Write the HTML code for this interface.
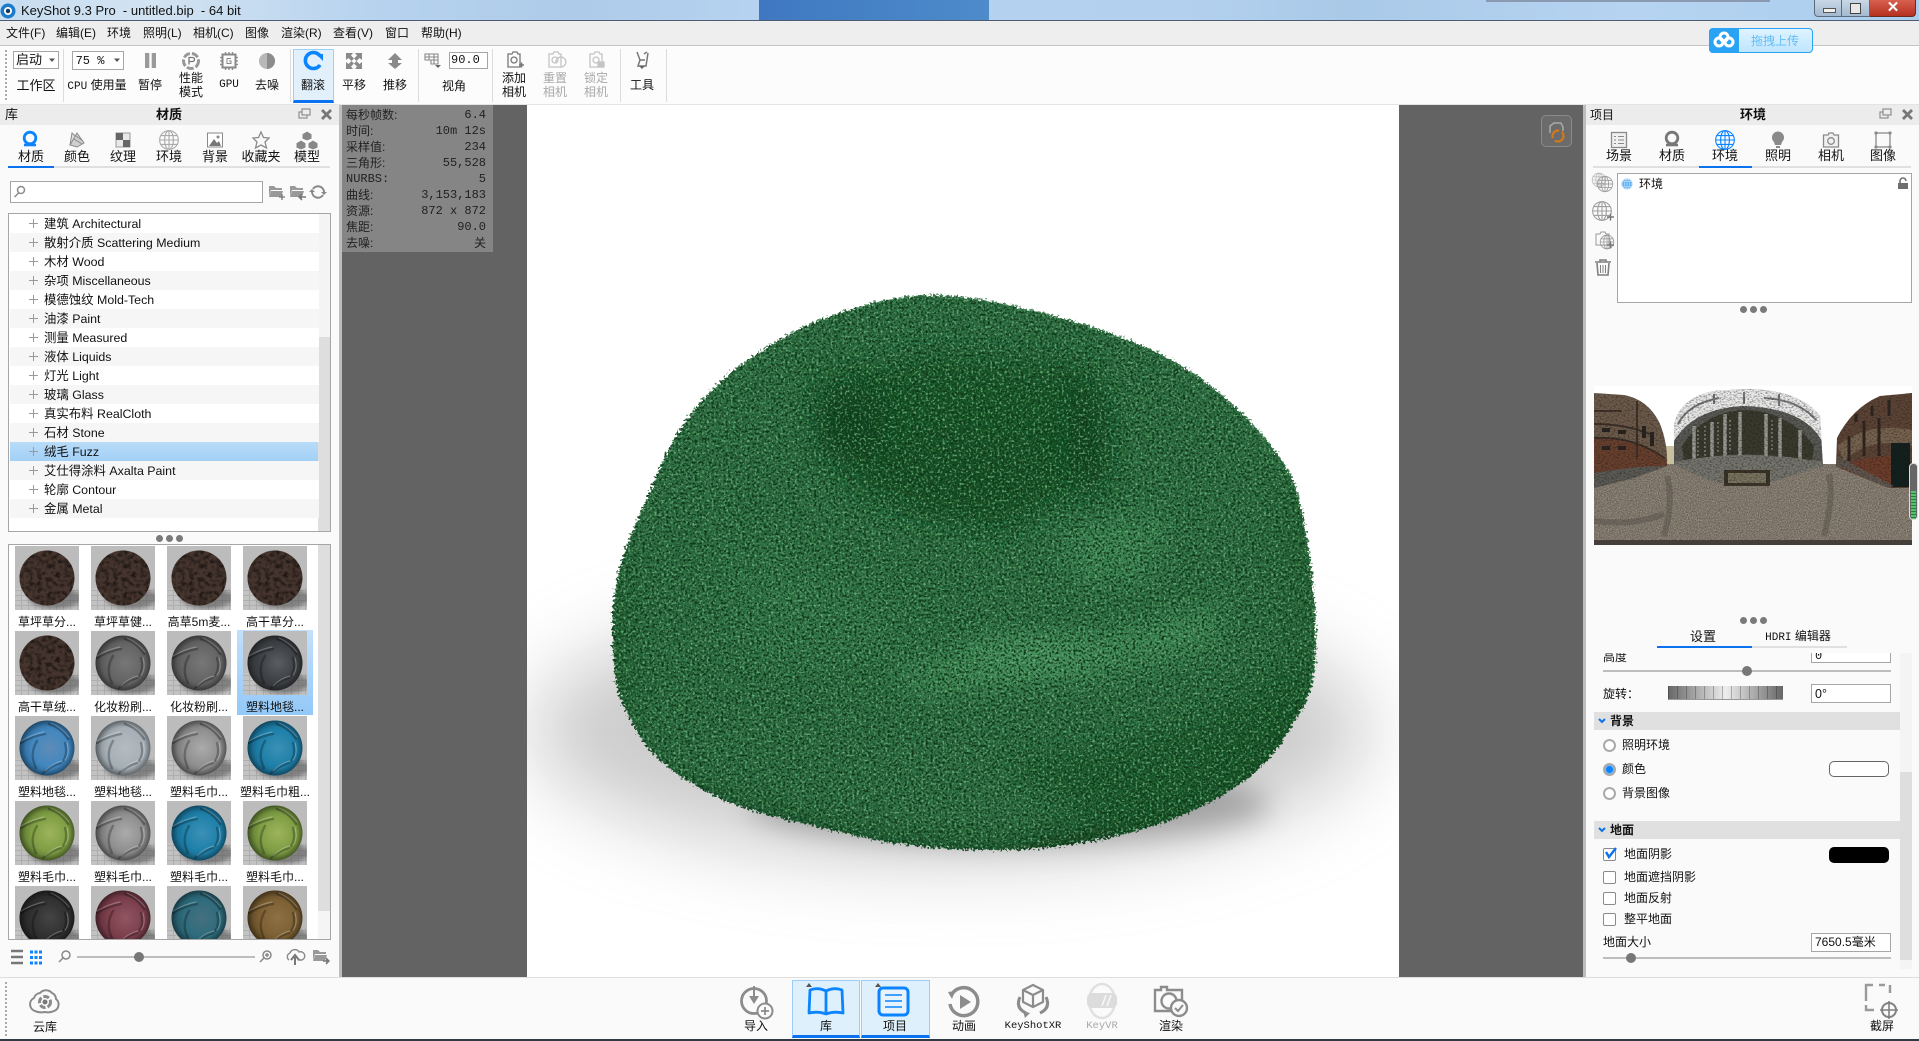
<!DOCTYPE html>
<html lang="zh"><head><meta charset="utf-8"><title>KeyShot 9.3 Pro</title>
<style>
html,body{margin:0;padding:0;width:1919px;height:1041px;overflow:hidden;background:#fafafa}
body{position:relative;font:12px "Liberation Sans","Noto Sans CJK SC",sans-serif;color:#111}
.a{position:absolute}
.t{position:absolute;white-space:nowrap;transform:translateY(-50%);line-height:16px}
.c{position:absolute;white-space:nowrap;transform:translate(-50%,-50%);line-height:16px;text-align:center}
.b{font-weight:700}
.g{color:#a8a8a8}
.m{font-family:"Liberation Mono","Noto Sans CJK SC",monospace}
.inp{position:absolute;background:#fff;border:1px solid #a6a6a6;box-sizing:border-box}
.row{position:absolute;left:1px;width:309px;height:19px;background:#fff}
.row.o{background:#f6f6f6}
.row.s{background:linear-gradient(#b8dcf9,#a3d0f6)}
.row span{position:absolute;left:34px;top:2px;line-height:17px;font-size:12.4px;white-space:nowrap}
.row i{position:absolute;left:19px;top:5px;width:9px;height:9px;background:linear-gradient(#9a9a9a,#9a9a9a) center/9px 1px no-repeat,linear-gradient(#9a9a9a,#9a9a9a) center/1px 9px no-repeat}
.dot{position:absolute;width:7px;height:7px;border-radius:50%;background:#7a7a7a}
.th{position:absolute;width:64px;height:64px;display:block}
.radio{position:absolute;width:13px;height:13px;border-radius:50%;border:2px solid #aaa;background:#fff;box-sizing:border-box}
.chk{position:absolute;width:13px;height:13px;border:1.5px solid #8a8a8a;border-radius:2px;background:#fff;box-sizing:border-box}
.sl{position:absolute;height:2px;background:#bdbdbd}
.kn{position:absolute;width:10px;height:10px;border-radius:50%;background:#777}
.sep{position:absolute;top:49px;width:1px;height:53px;background:#dcdcdc}
.grip{position:absolute;width:2px;background:repeating-linear-gradient(#aaa 0 2px,transparent 2px 4px)}
</style></head><body>
<svg width="0" height="0" style="position:absolute"><defs>
<filter id="nz" x="0" y="0" width="100%" height="100%"><feTurbulence type="fractalNoise" baseFrequency=".55" numOctaves="2" seed="5"/><feColorMatrix values="0 0 0 0 .5 0 0 0 0 .5 0 0 0 0 .5 1.6 0 0 0 -.5"/></filter>
<filter id="rock" x="-5%" y="-5%" width="110%" height="110%" color-interpolation-filters="sRGB"><feTurbulence type="fractalNoise" baseFrequency=".22" numOctaves="3" seed="8" result="n"/><feColorMatrix in="n" values="0 0 0 0 .12 0 0 0 0 .09 0 0 0 0 .08 2.6 0 0 0 -1.05" result="d"/><feComposite in="d" in2="SourceGraphic" operator="in" result="d2"/><feMerge><feMergeNode in="SourceGraphic"/><feMergeNode in="d2"/></feMerge></filter>
<filter id="bl2"><feGaussianBlur stdDeviation="2"/></filter>
<radialGradient id="edge" cx=".5" cy=".5" r=".5"><stop offset=".78" stop-color="#000" stop-opacity="0"/><stop offset="1" stop-color="#000" stop-opacity=".3"/></radialGradient>
<pattern id="tile" width="7" height="5" patternUnits="userSpaceOnUse"><rect width="7" height="5" fill="#c2c2c2"/><path d="M0 4.5H7M6.5 0V5" stroke="#a9a9a9" stroke-width=".8"/></pattern>
<symbol id="b" viewBox="0 0 64 64"><rect width="64" height="64" fill="#bcbcbc"/><rect y="42" width="64" height="22" fill="url(#tile)"/><rect width="64" height="42" filter="url(#nz)" opacity=".5"/><ellipse cx="40" cy="52" rx="26" ry="11" fill="#555" opacity=".6" filter="url(#bl2)"/></symbol>
<symbol id="w" viewBox="0 0 64 64"><g fill="none" stroke-linecap="round"><g stroke="#000" stroke-opacity=".26" stroke-width="2.400"><path d="M6 27Q18 20 30 18"/><path d="M34 8Q46 12 53 23"/><path d="M50 27Q53 38 48 45"/><path d="M46 47Q36 50 28 57"/><path d="M22 25Q14 38 21 52"/></g><g stroke="#fff" stroke-opacity=".25" stroke-width="1.200"><path d="M6 25Q18 18 29 16"/><path d="M36 7Q47 12 54 21"/><path d="M52 27Q55 38 50 44"/><path d="M47 45Q38 47 30 55"/></g></g><circle cx="32" cy="32" r="27.500" fill="url(#edge)"/></symbol>
<radialGradient id="s1" cx=".55" cy=".5" r=".6"><stop offset="0" stop-color="#5f8cb7"/><stop offset=".55" stop-color="#4287bf"/><stop offset="1" stop-color="#235a85"/></radialGradient>
<radialGradient id="s2" cx=".55" cy=".5" r=".6"><stop offset="0" stop-color="#b5bcc1"/><stop offset=".6" stop-color="#a5afb5"/><stop offset="1" stop-color="#717a80"/></radialGradient>
<radialGradient id="s3" cx=".55" cy=".5" r=".6"><stop offset="0" stop-color="#ababab"/><stop offset=".55" stop-color="#8f8f8f"/><stop offset="1" stop-color="#5e5e5e"/></radialGradient>
<radialGradient id="s4" cx=".55" cy=".5" r=".6"><stop offset="0" stop-color="#3b90b5"/><stop offset=".55" stop-color="#1f80a9"/><stop offset="1" stop-color="#125a7c"/></radialGradient>
<radialGradient id="s5" cx=".55" cy=".5" r=".6"><stop offset="0" stop-color="#9db45c"/><stop offset=".55" stop-color="#7f9e44"/><stop offset="1" stop-color="#50682a"/></radialGradient>
<radialGradient id="s6" cx=".55" cy=".5" r=".6"><stop offset="0" stop-color="#444"/><stop offset=".6" stop-color="#2f2f2f"/><stop offset="1" stop-color="#1d1d1d"/></radialGradient>
<radialGradient id="s7" cx=".55" cy=".5" r=".6"><stop offset="0" stop-color="#8f5560"/><stop offset=".55" stop-color="#7c404c"/><stop offset="1" stop-color="#552833"/></radialGradient>
<radialGradient id="s8" cx=".55" cy=".5" r=".6"><stop offset="0" stop-color="#46707f"/><stop offset=".55" stop-color="#2f6c7c"/><stop offset="1" stop-color="#1c4b58"/></radialGradient>
<radialGradient id="s9" cx=".55" cy=".5" r=".6"><stop offset="0" stop-color="#8d7145"/><stop offset=".55" stop-color="#7d6034"/><stop offset="1" stop-color="#523e1f"/></radialGradient>
<radialGradient id="s10" cx=".55" cy=".5" r=".6"><stop offset="0" stop-color="#777"/><stop offset=".6" stop-color="#636363"/><stop offset="1" stop-color="#454545"/></radialGradient>
<radialGradient id="s11" cx=".55" cy=".5" r=".6"><stop offset="0" stop-color="#5a5d62"/><stop offset=".5" stop-color="#404347"/><stop offset="1" stop-color="#2c2e31"/></radialGradient>
<symbol id="br" viewBox="0 0 64 64"><use href="#b"/><circle cx="32" cy="32" r="27.5" fill="#46352e" filter="url(#rock)"/></symbol>
<symbol id="gl" viewBox="-10 -10 20 20"><g fill="none" stroke="currentColor" stroke-width="1"><circle r="8.5"/><ellipse rx="4" ry="8.5"/><path d="M0-8.5V8.5M-8.5 0H8.5M-7.5-4H7.5M-7.5 4H7.5"/></g></symbol>
<filter id="fur" x="-6%" y="-6%" width="112%" height="112%" color-interpolation-filters="sRGB">
<feTurbulence type="fractalNoise" baseFrequency=".42" numOctaves="2" seed="11" result="n"/>
<feDisplacementMap in="SourceGraphic" in2="n" scale="9" xChannelSelector="R" yChannelSelector="G" result="d"/>
<feColorMatrix in="n" values="0 0 0 0 .06 0 0 0 0 .22 0 0 0 0 .1 4.6 0 0 0 -2.1" result="dk"/>
<feComposite in="dk" in2="d" operator="in" result="dk2"/>
<feColorMatrix in="n" values="0 0 0 0 .42 0 0 0 0 .68 0 0 0 0 .47 0 3.8 0 0 -2" result="lt"/>
<feComposite in="lt" in2="d" operator="in" result="lt2"/>
<feMerge><feMergeNode in="d"/><feMergeNode in="dk2"/><feMergeNode in="lt2"/></feMerge></filter>
<filter id="bk14" x="-50%" y="-50%" width="200%" height="200%"><feGaussianBlur stdDeviation="14"/></filter>
<filter id="bk26" x="-50%" y="-50%" width="200%" height="200%"><feGaussianBlur stdDeviation="26"/></filter>
<filter id="bk40" x="-50%" y="-100%" width="200%" height="300%"><feGaussianBlur stdDeviation="40"/></filter>
<clipPath id="bc"><path d="M940 295C1000 298 1115 328 1172 360C1212 382 1270 432 1292 478C1306 512 1316 590 1316 644C1316 680 1308 700 1300 712C1280 745 1270 765 1232 789C1200 810 1160 826 1119 835C1080 845 1030 851 987 850C930 849 880 843 836 831C790 820 745 812 709 793C680 778 655 760 642 739C625 712 614 690 614 663C612 640 612 620 614 598C618 565 630 535 642 510C655 480 668 445 685 422C700 400 720 380 742 364C770 345 795 328 826 318C860 305 900 294 940 295Z"/></clipPath>
<filter id="gr" x="0" y="0" width="100%" height="100%" color-interpolation-filters="sRGB"><feTurbulence type="fractalNoise" baseFrequency=".9" numOctaves="2" seed="2" result="n"/><feColorMatrix in="n" values="0 0 0 0 .32 0 0 0 0 .29 0 0 0 0 .26 3.6 0 0 0 -1.6" result="d"/><feColorMatrix in="n" values="0 0 0 0 .72 0 0 0 0 .68 0 0 0 0 .62 0 3.2 0 0 -1.6" result="l"/><feMerge><feMergeNode in="d"/><feMergeNode in="l"/></feMerge></filter>
<filter id="gr2" x="0" y="0" width="100%" height="100%" color-interpolation-filters="sRGB"><feTurbulence type="fractalNoise" baseFrequency=".5 .7" numOctaves="2" seed="7"/><feColorMatrix values="0 0 0 0 .1 0 0 0 0 .09 0 0 0 0 .08 3.4 0 0 0 -1.5"/></filter>
<clipPath id="bld"><path d="M0 7L30 9Q55 14 66 38Q74 58 73 80L40 92L0 102Z"/><path d="M80 78V40Q85 12 120 5L150 3Q205 3 226 30L229 80L205 86Q170 103 130 98Q100 90 80 78Z"/><path d="M242 80L243 52Q258 22 286 10L318 7V102L295 102L270 92Z"/></clipPath>
</defs></svg>

<!-- title bar -->
<div class="a" style="left:0;top:0;width:1919px;height:21px;background:linear-gradient(90deg,#c7ddf0 0,#d2e3f2 8%,#b6d2ee 20%,#aecbe9 30%,#b5d3f0 39%,#b3d1ef 62%,#a9c9e8 70%,#b6d4f2 85%,#aacdec 100%)"></div>
<div class="a" style="left:759px;top:0;width:230px;height:21px;background:linear-gradient(90deg,#3f78c0,#4d8bcb)"></div>
<div class="a" style="left:1486px;top:0;width:284px;height:2px;background:#8a9ab0"></div>
<div class="a" style="left:0;top:20px;width:1919px;height:1px;background:#4d5c70"></div>
<svg class="a" style="left:0;top:0" width="20" height="20"><circle cx="8" cy="11" r="7.5" fill="#1c7cc9"/><circle cx="8" cy="11" r="4" fill="#fff"/><circle cx="8" cy="11" r="2.2" fill="#16365a"/></svg>
<div class="t" style="left:21px;top:11px;font-size:13px;color:#111">KeyShot 9.3 Pro&nbsp; - untitled.bip&nbsp; - 64 bit</div>
<div class="a" style="left:1814px;top:0;width:28px;height:17px;background:linear-gradient(#c8d8e8,#a4b9cf);border:1px solid #5c6b7e;border-top:0;box-sizing:border-box;border-radius:0 0 0 4px"><div class="a" style="left:8px;top:8px;width:11px;height:3px;background:#f0f0f0;border:1px solid #555"></div></div>
<div class="a" style="left:1842px;top:0;width:28px;height:17px;background:linear-gradient(#c8d8e8,#a4b9cf);border:1px solid #5c6b7e;border-left:0;border-top:0;box-sizing:border-box"><div class="a" style="left:8px;top:3px;width:9px;height:9px;border:1.5px solid #444;background:#e8e8e8"></div></div>
<div class="a" style="left:1870px;top:0;width:46px;height:17px;background:linear-gradient(#d8604f,#b5301f);border:1px solid #6b2a24;border-left:0;border-top:0;box-sizing:border-box;border-radius:0 0 4px 0"></div>
<div class="c b" style="left:1893px;top:8px;font-size:15px;color:#fff">✕</div>

<!-- menu -->
<div class="a" style="left:0;top:21px;width:1919px;height:25px;background:#eeeeee;border-bottom:1px solid #c4c4c4;box-sizing:border-box"></div>
<div class="t" style="left:6px;top:33px">文件(F)</div><div class="t" style="left:56px;top:33px">编辑(E)</div><div class="t" style="left:107px;top:33px">环境</div><div class="t" style="left:143px;top:33px">照明(L)</div><div class="t" style="left:193px;top:33px">相机(C)</div><div class="t" style="left:245px;top:33px">图像</div><div class="t" style="left:281px;top:33px">渲染(R)</div><div class="t" style="left:333px;top:33px">查看(V)</div><div class="t" style="left:385px;top:33px">窗口</div><div class="t" style="left:421px;top:33px">帮助(H)</div>

<!-- toolbar -->
<div class="a" style="left:0;top:46px;width:1919px;height:59px;background:#fcfcfc;border-bottom:1px solid #e4e4e4;box-sizing:border-box"></div>
<div class="a" style="left:1709px;top:28px;width:104px;height:25px;background:linear-gradient(#dff3ff,#bfe6ff);border:1px solid #2aa3f5;box-sizing:border-box;border-radius:4px"></div>
<div class="a" style="left:1709px;top:28px;width:30px;height:25px;background:#2aa3f5;border-radius:4px 0 0 4px"></div>
<svg class="a" style="left:1712px;top:30px" width="24" height="20" fill="none" stroke="#fff" stroke-width="3"><circle cx="12" cy="7" r="4"/><circle cx="7" cy="12" r="4"/><circle cx="17" cy="12" r="4"/></svg>
<div class="c" style="left:1775px;top:41px;color:#63bdf5">拖拽上传</div>
<div class="grip" style="left:5px;top:50px;height:50px"></div>
<div class="sep" style="left:63px"></div><div class="sep" style="left:290px"></div><div class="sep" style="left:418px"></div><div class="sep" style="left:492px"></div><div class="sep" style="left:620px"></div><div class="sep" style="left:666px"></div>
<div class="inp" style="left:13px;top:51px;width:46px;height:18px"></div><div class="t" style="left:16px;top:60px;font-size:13px">启动</div>
<div class="inp" style="left:72px;top:51px;width:52px;height:19px"></div><div class="c m" style="left:90px;top:61px;font-size:12px">75 %</div>
<div class="a" style="left:293px;top:49px;width:41px;height:54px;background:#e1f0fb;border:1px solid #9dd0f8;border-bottom:3px solid #0a72ee;box-sizing:border-box"></div>
<div class="c" style="left:36px;top:86px;font-size:13px">工作区</div>
<div class="c" style="left:97px;top:86px"><span class="m" style="font-size:11px">CPU</span> 使用量</div>
<div class="c" style="left:150px;top:85px">暂停</div>
<div class="c" style="left:191px;top:85px;line-height:14px">性能<br>模式</div>
<div class="c m" style="left:229px;top:85px;font-size:11px">GPU</div>
<div class="c" style="left:267px;top:85px">去噪</div>
<div class="c" style="left:313px;top:85px">翻滚</div><div class="c" style="left:354px;top:85px">平移</div><div class="c" style="left:395px;top:85px">推移</div>
<div class="inp" style="left:449px;top:52px;width:39px;height:17px"></div><div class="t m" style="left:451px;top:60px">90.0</div>
<div class="c" style="left:454px;top:86px">视角</div>
<div class="c" style="left:514px;top:85px;line-height:14px">添加<br>相机</div><div class="c g" style="left:555px;top:85px;line-height:14px">重置<br>相机</div><div class="c g" style="left:596px;top:85px;line-height:14px">锁定<br>相机</div>
<div class="c" style="left:642px;top:85px">工具</div>

<!-- viewport -->
<div class="a" style="left:339px;top:105px;width:3px;height:872px;background:#bdbdbd"></div>
<div class="a" style="left:1583px;top:105px;width:3px;height:872px;background:#bdbdbd"></div>
<div class="a" style="left:342px;top:105px;width:1241px;height:872px;background:#636363"></div>
<svg class="a" style="left:527px;top:105px" width="872" height="872" viewBox="527 105 872 872">
<rect x="527" y="105" width="872" height="872" fill="#fff"/>
<ellipse cx="950" cy="730" rx="420" ry="130" fill="#999" opacity=".5" filter="url(#bk40)"/>
<ellipse cx="1010" cy="805" rx="260" ry="40" fill="#555" opacity=".4" filter="url(#bk14)"/>
<g filter="url(#fur)"><g clip-path="url(#bc)">
<rect x="600" y="280" width="730" height="590" fill="#2c6d41"/>
<path d="M810 385L930 352L1090 362L1105 470L1000 535L860 490Z" fill="#185528" filter="url(#bk14)"/>
<ellipse cx="850" cy="425" rx="36" ry="40" fill="#0f3f1a" opacity=".8" filter="url(#bk14)"/>
<ellipse cx="1088" cy="440" rx="20" ry="60" fill="#0f3f1a" opacity=".75" filter="url(#bk14)"/>
<ellipse cx="960" cy="475" rx="90" ry="40" fill="#144c22" opacity=".6" filter="url(#bk14)"/>
<path d="M890 665Q1040 655 1230 600L1215 645Q1090 690 910 690Z" fill="#45925c" opacity=".85" filter="url(#bk14)"/>
<ellipse cx="1025" cy="651" rx="70" ry="14" fill="#4f9e68" opacity=".8" filter="url(#bk14)"/>
<path d="M1060 535Q1130 505 1170 520L1150 580L1070 585Z" fill="#43905a" opacity=".7" filter="url(#bk14)"/>
<path d="M720 540Q850 570 950 640L740 660Z" fill="#3b8552" opacity=".45" filter="url(#bk26)"/>
<path d="M600 750Q800 850 1000 850L1200 800L1330 680L1330 880L600 880Z" fill="#0c3517" opacity=".85" filter="url(#bk14)"/>
<path d="M1000 760Q1180 750 1300 660L1330 760L1150 860Z" fill="#185526" opacity=".8" filter="url(#bk14)"/>
<path d="M596 560L628 560L640 760L596 760Z" fill="#1d5a2c" opacity=".55" filter="url(#bk14)"/>
<path d="M1275 480L1335 480L1335 700L1290 700Z" fill="#1d5a2c" opacity=".45" filter="url(#bk14)"/>
</g></g>
</svg>
<div class="a" style="left:342px;top:105px;width:151px;height:147px;background:#858585"></div>
<div class="t" style="left:346px;top:115px;color:#222">每秒帧数:</div><div class="t m" style="right:1433px;top:115px;color:#222">6.4</div>
<div class="t" style="left:346px;top:131px;color:#222">时间:</div><div class="t m" style="right:1433px;top:131px;color:#222">10m 12s</div>
<div class="t" style="left:346px;top:147px;color:#222">采样值:</div><div class="t m" style="right:1433px;top:147px;color:#222">234</div>
<div class="t" style="left:346px;top:163px;color:#222">三角形:</div><div class="t m" style="right:1433px;top:163px;color:#222">55,528</div>
<div class="t m" style="left:346px;top:179px;color:#222">NURBS:</div><div class="t m" style="right:1433px;top:179px;color:#222">5</div>
<div class="t" style="left:346px;top:195px;color:#222">曲线:</div><div class="t m" style="right:1433px;top:195px;color:#222">3,153,183</div>
<div class="t" style="left:346px;top:211px;color:#222">资源:</div><div class="t m" style="right:1433px;top:211px;color:#222">872 x 872</div>
<div class="t" style="left:346px;top:227px;color:#222">焦距:</div><div class="t m" style="right:1433px;top:227px;color:#222">90.0</div>
<div class="t" style="left:346px;top:243px;color:#222">去噪:</div><div class="t" style="right:1433px;top:243px;color:#222">关</div>
<div class="a" style="left:1541px;top:115px;width:31px;height:32px;background:#6b6b6b;border:1px solid #8a8a8a;border-radius:5px;box-sizing:border-box"></div>
<svg class="a" style="left:1541px;top:115px" width="31" height="32" fill="none"><path d="M9 18V11L13 8H20L22 12V16" stroke="#aaa" stroke-width="1.500"/><circle cx="17" cy="21" r="5.500" stroke="#d07a1c" stroke-width="2.200" stroke-dasharray="12 3"/></svg>

<!-- left panel -->
<div class="a" style="left:0;top:105px;width:339px;height:20px;background:#ececec"></div>
<div class="t" style="left:5px;top:115px;font-size:13px">库</div><div class="c b" style="left:169px;top:115px;font-size:13px">材质</div>
<div class="c" style="left:31px;top:157px;font-size:13px">材质</div><div class="c" style="left:77px;top:157px;font-size:13px">颜色</div><div class="c" style="left:123px;top:157px;font-size:13px">纹理</div><div class="c" style="left:169px;top:157px;font-size:13px">环境</div><div class="c" style="left:215px;top:157px;font-size:13px">背景</div><div class="c" style="left:261px;top:157px;font-size:13px">收藏夹</div><div class="c" style="left:307px;top:157px;font-size:13px">模型</div>
<div class="a" style="left:8px;top:166px;width:322px;height:2px;background:#e0e0e0"></div><div class="a" style="left:8px;top:166px;width:46px;height:2px;background:#0a72ee"></div>
<div class="inp" style="left:10px;top:181px;width:253px;height:22px"></div>
<div class="a" style="left:8px;top:213px;width:323px;height:319px;background:#fff;border:1px solid #a6a6a6;box-sizing:border-box;overflow:hidden">
<div class="a" style="left:309px;top:0;width:12px;height:319px;background:#f4f4f4"></div><div class="a" style="left:309px;top:123px;width:12px;height:196px;background:#dedede"></div>
<div class="row" style="top:0"><i></i><span>建筑 Architectural</span></div>
<div class="row o" style="top:19px"><i></i><span>散射介质 Scattering Medium</span></div>
<div class="row" style="top:38px"><i></i><span>木材 Wood</span></div>
<div class="row o" style="top:57px"><i></i><span>杂项 Miscellaneous</span></div>
<div class="row" style="top:76px"><i></i><span>模德蚀纹 Mold-Tech</span></div>
<div class="row o" style="top:95px"><i></i><span>油漆 Paint</span></div>
<div class="row" style="top:114px"><i></i><span>测量 Measured</span></div>
<div class="row o" style="top:133px"><i></i><span>液体 Liquids</span></div>
<div class="row" style="top:152px"><i></i><span>灯光 Light</span></div>
<div class="row o" style="top:171px"><i></i><span>玻璃 Glass</span></div>
<div class="row" style="top:190px"><i></i><span>真实布料 RealCloth</span></div>
<div class="row o" style="top:209px"><i></i><span>石材 Stone</span></div>
<div class="row s" style="top:228px;width:308px"><i></i><span>绒毛 Fuzz</span></div>
<div class="row o" style="top:247px"><i></i><span>艾仕得涂料 Axalta Paint</span></div>
<div class="row" style="top:266px"><i></i><span>轮廓 Contour</span></div>
<div class="row o" style="top:285px"><i></i><span>金属 Metal</span></div>
</div>
<div class="dot" style="left:156px;top:535px"></div><div class="dot" style="left:166px;top:535px"></div><div class="dot" style="left:176px;top:535px"></div>

<!-- material grid -->
<div class="a" style="left:8px;top:544px;width:323px;height:396px;background:#fff;border:1px solid #a6a6a6;box-sizing:border-box;overflow:hidden">
<div class="a" style="left:309px;top:0;width:12px;height:366px;background:#dedede"></div><div class="a" style="left:309px;top:366px;width:12px;height:30px;background:#f5f5f5"></div>
<div class="a" style="left:228px;top:85px;width:76px;height:85px;background:linear-gradient(#c2e0fb,#93c8f8)"></div>
<svg class="th" style="left:6px;top:1px"><use href="#br" width="64" height="64"/></svg><svg class="th" style="left:82px;top:1px"><use href="#br" width="64" height="64"/></svg><svg class="th" style="left:158px;top:1px"><use href="#br" width="64" height="64"/></svg><svg class="th" style="left:234px;top:1px"><use href="#br" width="64" height="64"/></svg>
<svg class="th" style="left:6px;top:86px"><use href="#br" width="64" height="64"/></svg>
<svg class="th" style="left:82px;top:86px"><use href="#b" width="64" height="64"/><circle cx="32" cy="32" r="27.5" fill="url(#s10)"/><use href="#w" width="64" height="64"/></svg>
<svg class="th" style="left:158px;top:86px"><use href="#b" width="64" height="64"/><circle cx="32" cy="32" r="27.5" fill="url(#s10)"/><use href="#w" width="64" height="64"/></svg>
<svg class="th" style="left:234px;top:86px"><use href="#b" width="64" height="64"/><circle cx="32" cy="32" r="27.5" fill="url(#s11)"/><use href="#w" width="64" height="64"/></svg>
<svg class="th" style="left:6px;top:171px"><use href="#b" width="64" height="64"/><circle cx="32" cy="32" r="27.5" fill="url(#s1)"/><use href="#w" width="64" height="64"/></svg>
<svg class="th" style="left:82px;top:171px"><use href="#b" width="64" height="64"/><circle cx="32" cy="32" r="27.5" fill="url(#s2)"/><use href="#w" width="64" height="64"/></svg>
<svg class="th" style="left:158px;top:171px"><use href="#b" width="64" height="64"/><circle cx="32" cy="32" r="27.5" fill="url(#s3)"/><use href="#w" width="64" height="64"/></svg>
<svg class="th" style="left:234px;top:171px"><use href="#b" width="64" height="64"/><circle cx="32" cy="32" r="27.5" fill="url(#s4)"/><use href="#w" width="64" height="64"/></svg>
<svg class="th" style="left:6px;top:256px"><use href="#b" width="64" height="64"/><circle cx="32" cy="32" r="27.5" fill="url(#s5)"/><use href="#w" width="64" height="64"/></svg>
<svg class="th" style="left:82px;top:256px"><use href="#b" width="64" height="64"/><circle cx="32" cy="32" r="27.5" fill="url(#s3)"/><use href="#w" width="64" height="64"/></svg>
<svg class="th" style="left:158px;top:256px"><use href="#b" width="64" height="64"/><circle cx="32" cy="32" r="27.5" fill="url(#s4)"/><use href="#w" width="64" height="64"/></svg>
<svg class="th" style="left:234px;top:256px"><use href="#b" width="64" height="64"/><circle cx="32" cy="32" r="27.5" fill="url(#s5)"/><use href="#w" width="64" height="64"/></svg>
<svg class="th" style="left:6px;top:341px"><use href="#b" width="64" height="64"/><circle cx="32" cy="32" r="27.5" fill="url(#s6)"/><use href="#w" width="64" height="64"/></svg>
<svg class="th" style="left:82px;top:341px"><use href="#b" width="64" height="64"/><circle cx="32" cy="32" r="27.5" fill="url(#s7)"/><use href="#w" width="64" height="64"/></svg>
<svg class="th" style="left:158px;top:341px"><use href="#b" width="64" height="64"/><circle cx="32" cy="32" r="27.5" fill="url(#s8)"/><use href="#w" width="64" height="64"/></svg>
<svg class="th" style="left:234px;top:341px"><use href="#b" width="64" height="64"/><circle cx="32" cy="32" r="27.5" fill="url(#s9)"/><use href="#w" width="64" height="64"/></svg>
<div class="c" style="left:38px;top:77px">草坪草分...</div><div class="c" style="left:114px;top:77px">草坪草健...</div><div class="c" style="left:190px;top:77px">高草5m麦...</div><div class="c" style="left:266px;top:77px">高干草分...</div>
<div class="c" style="left:38px;top:162px">高干草绒...</div><div class="c" style="left:114px;top:162px">化妆粉刷...</div><div class="c" style="left:190px;top:162px">化妆粉刷...</div><div class="c" style="left:266px;top:162px">塑料地毯...</div>
<div class="c" style="left:38px;top:247px">塑料地毯...</div><div class="c" style="left:114px;top:247px">塑料地毯...</div><div class="c" style="left:190px;top:247px">塑料毛巾...</div><div class="c" style="left:266px;top:247px">塑料毛巾粗...</div>
<div class="c" style="left:38px;top:332px">塑料毛巾...</div><div class="c" style="left:114px;top:332px">塑料毛巾...</div><div class="c" style="left:190px;top:332px">塑料毛巾...</div><div class="c" style="left:266px;top:332px">塑料毛巾...</div>
</div>
<div class="sl" style="left:77px;top:956px;width:178px"></div><div class="kn" style="left:134px;top:952px"></div>

<!-- bottom bar -->
<div class="a" style="left:0;top:977px;width:1919px;height:62px;background:#fafafa;border-top:1px solid #dedede;box-sizing:border-box"></div>
<div class="a" style="left:0;top:1039px;width:1919px;height:2px;background:#2f3a44"></div>
<div class="grip" style="left:5px;top:982px;height:54px"></div>
<div class="a" style="left:792px;top:980px;width:68px;height:58px;background:#def0fc;border:1px solid #9ccdf8;border-bottom:3px solid #0a72ee;box-sizing:border-box"></div>
<div class="a" style="left:861px;top:980px;width:69px;height:58px;background:#def0fc;border:1px solid #9ccdf8;border-bottom:3px solid #0a72ee;box-sizing:border-box"></div>
<div class="c" style="left:45px;top:1027px">云库</div><div class="c" style="left:756px;top:1026px">导入</div><div class="c" style="left:826px;top:1026px">库</div><div class="c" style="left:895px;top:1026px">项目</div><div class="c" style="left:964px;top:1026px">动画</div><div class="c m" style="left:1033px;top:1026px;font-size:10.5px">KeyShotXR</div><div class="c m g" style="left:1102px;top:1026px;font-size:10.5px">KeyVR</div><div class="c" style="left:1171px;top:1026px">渲染</div><div class="c" style="left:1882px;top:1026px">截屏</div>

<!-- right panel -->
<div class="a" style="left:1586px;top:105px;width:333px;height:20px;background:#ececec"></div>
<div class="t" style="left:1590px;top:115px">项目</div><div class="c b" style="left:1753px;top:115px;font-size:13px">环境</div>
<div class="c" style="left:1619px;top:156px;font-size:13px">场景</div><div class="c" style="left:1672px;top:156px;font-size:13px">材质</div><div class="c" style="left:1725px;top:156px;font-size:13px">环境</div><div class="c" style="left:1778px;top:156px;font-size:13px">照明</div><div class="c" style="left:1831px;top:156px;font-size:13px">相机</div><div class="c" style="left:1883px;top:156px;font-size:13px">图像</div>
<div class="a" style="left:1593px;top:166px;width:318px;height:2px;background:#e0e0e0"></div><div class="a" style="left:1699px;top:166px;width:53px;height:2px;background:#0a72ee"></div>
<div class="a" style="left:1617px;top:173px;width:295px;height:130px;background:#fff;border:1px solid #a6a6a6;box-sizing:border-box"></div>
<div class="t" style="left:1639px;top:184px">环境</div>
<div class="dot" style="left:1740px;top:306px"></div><div class="dot" style="left:1750px;top:306px"></div><div class="dot" style="left:1760px;top:306px"></div>

<!-- HDRI -->
<svg class="a" style="left:1594px;top:386px" width="318" height="159" viewBox="0 0 318 159">
<rect width="318" height="159" fill="#fff"/>
<rect x="70" y="60" width="12" height="30" fill="#c9c0a0"/>
<rect y="78" width="318" height="81" fill="#7e756b"/>
<path d="M0 100L73 82L130 100L205 90L245 82L320 102V159H0Z" fill="#80776c"/>
<rect y="78" width="318" height="81" filter="url(#gr)" opacity=".7"/>
<path d="M70 150Q80 115 73 90M0 135Q40 140 70 128M230 150Q240 110 235 88" fill="none" stroke="#45413b" stroke-width="6" opacity=".35"/>
<rect y="154" width="318" height="5" fill="#453f39"/>
<path d="M0 7L30 9Q55 14 66 38Q74 58 73 80L40 92L0 102Z" fill="#6d5b4b"/>
<path d="M0 52Q40 50 72 72L73 80L40 92L0 102Z" fill="#69402e"/>
<path d="M0 87Q40 80 73 80L40 92L0 102Z" fill="#5c5b55"/>
<path d="M0 25H28M0 38Q35 38 60 50M0 52Q40 50 70 72M43 15V72" stroke="#3a2e26" stroke-width="1.800" fill="none"/>
<path d="M8 44H16M24 46H32M8 62H16M24 62H32M50 40V52M58 46V60" stroke="#2a2420" stroke-width="4" fill="none"/>
<path d="M80 78V40Q85 12 120 5L150 3Q205 3 226 30L229 80L205 86Q170 103 130 98Q100 90 80 78Z" fill="#5a5a56"/>
<path d="M80 40Q85 12 120 5L150 3Q205 3 226 30L228 55Q210 22 150 20Q100 22 80 55Z" fill="#ececec"/>
<path d="M84 38Q94 18 125 12M170 12Q205 14 222 34M120 8L120 18M150 6V18M185 8V20" stroke="#777" stroke-width="2" fill="none"/>
<path d="M88 60Q110 26 150 24Q195 25 220 60L218 75Q150 62 90 75Z" fill="#3a3b2e"/>
<path d="M100 40V75M131 28V70M146 26V70M172 28V70M186 32V75M206 44V78M118 36V72" stroke="#9a9a94" stroke-width="3.500" fill="none"/>
<path d="M104 44V70M111 40V70M124 36V68M136 34V66M178 34V66" stroke="#8a8a84" stroke-width="1.500" stroke-dasharray="2 2" fill="none"/>
<path d="M80 76Q150 62 229 76L229 80L205 86Q170 103 130 98Q100 90 80 78Z" fill="#76766f"/>
<rect x="130" y="84" width="46" height="16" fill="#3a3428"/><rect x="134" y="87" width="38" height="10" fill="#7a7460"/>
<path d="M242 80L243 52Q258 22 286 10L318 7V102L295 102L270 92Z" fill="#5d4436"/>
<path d="M243 60Q275 35 318 44V60Q275 50 250 75Z" fill="#85705a" opacity=".7"/>
<path d="M245 82Q270 70 300 70L300 102L270 92Z" fill="#6e3d2b"/>
<rect x="297" y="57" width="19" height="44" fill="#12201e"/>
<path d="M243 80L270 92L295 102L300 100L243 70Z" fill="#5f5d57" opacity=".8"/>
<path d="M270 35V70M285 32V70M255 50V75M262 28V36M278 20V30M295 14V30" stroke="#2f2620" stroke-width="3" fill="none"/>
<g clip-path="url(#bld)"><rect width="318" height="159" filter="url(#gr2)" opacity=".45"/></g>
</svg>
<div class="a" style="left:1909px;top:463px;width:9px;height:57px;background:#666;border:1px solid #ddd;border-radius:4px;box-sizing:border-box"></div>
<div class="a" style="left:1911px;top:491px;width:5px;height:28px;background:repeating-linear-gradient(#4fc46c 0 2px,#2d7b40 2px 3px)"></div>
<div class="dot" style="left:1740px;top:617px"></div><div class="dot" style="left:1750px;top:617px"></div><div class="dot" style="left:1760px;top:617px"></div>
<div class="c" style="left:1703px;top:637px;font-size:13px">设置</div><div class="c" style="left:1798px;top:637px"><span class="m" style="font-size:11px">HDRI</span> 编辑器</div>
<div class="a" style="left:1657px;top:646px;width:190px;height:2px;background:#e0e0e0"></div><div class="a" style="left:1657px;top:646px;width:95px;height:2px;background:#0a72ee"></div>

<!-- settings -->
<div class="a" style="left:1586px;top:653px;width:330px;height:316px;overflow:hidden">
<div class="a" style="left:314px;top:0;width:12px;height:316px;background:#f4f4f4"></div><div class="a" style="left:314px;top:119px;width:12px;height:188px;background:#dedede"></div>
<div class="t" style="left:17px;top:4px">高度</div>
<div class="inp" style="left:225px;top:-12px;width:80px;height:22px"></div><div class="t m" style="left:229px;top:3px">0</div>
<div class="sl" style="left:17px;top:17px;width:288px"></div><div class="kn" style="left:156px;top:13px"></div>
<div class="t" style="left:17px;top:41px">旋转：</div>
<div class="a" style="left:82px;top:33px;width:115px;height:14px;background:repeating-linear-gradient(90deg,rgba(0,0,0,.25) 0 1px,transparent 1px 9px),linear-gradient(90deg,#666,#eee 50%,#666);border-bottom:1px solid #999;box-sizing:border-box"></div>
<div class="inp" style="left:225px;top:31px;width:80px;height:19px"></div><div class="t" style="left:229px;top:41px;font-size:12.5px">0°</div>
<div class="a" style="left:8px;top:59px;width:306px;height:18px;background:#e0e0e0"></div>
<div class="t b" style="left:24px;top:68px">背景</div>
<div class="radio" style="left:17px;top:86px"></div><div class="t" style="left:36px;top:92px">照明环境</div>
<div class="radio" style="left:17px;top:110px;background:#0a84ff;box-shadow:inset 0 0 0 1px #7cbcff"></div><div class="t" style="left:36px;top:116px">颜色</div>
<div class="radio" style="left:17px;top:134px"></div><div class="t" style="left:36px;top:140px">背景图像</div>
<div class="a" style="left:243px;top:108px;width:60px;height:16px;background:#fff;border:1px solid #666;border-radius:5px;box-sizing:border-box"></div>
<div class="a" style="left:8px;top:168px;width:306px;height:18px;background:#e0e0e0"></div>
<div class="t b" style="left:24px;top:177px">地面</div>
<div class="chk" style="left:17px;top:195px"></div><div class="t" style="left:38px;top:201px">地面阴影</div>
<div class="chk" style="left:17px;top:218px"></div><div class="t" style="left:38px;top:224px">地面遮挡阴影</div>
<div class="chk" style="left:17px;top:239px"></div><div class="t" style="left:38px;top:245px">地面反射</div>
<div class="chk" style="left:17px;top:260px"></div><div class="t" style="left:38px;top:266px">整平地面</div>
<div class="a" style="left:243px;top:194px;width:60px;height:16px;background:#000;border-radius:5px"></div>
<div class="t" style="left:17px;top:289px">地面大小</div>
<div class="inp" style="left:225px;top:280px;width:80px;height:19px"></div><div class="t" style="left:229px;top:289px;font-size:12px">7650.5毫米</div>
<div class="sl" style="left:17px;top:304px;width:288px"></div><div class="kn" style="left:40px;top:300px"></div>
<svg class="a" style="left:0;top:0" width="60" height="316" fill="none" stroke="#0a72ee" stroke-width="2"><path d="M13 66l3 3 3-3M13 175l3 3 3-3"/><path d="M20 199l3 5 7-9" stroke-width="2.400"/></svg>
</div>

<!-- icons overlay -->
<svg class="a" style="left:0;top:0;pointer-events:none" width="1919" height="1041" fill="none">
<path d="M49 58.500H55L52 62ZM114 58.500H120L117 62Z" fill="#555"/>
<rect x="145" y="53" width="4.300" height="15" fill="#9a9a9a"/><rect x="151.700" y="53" width="4.300" height="15" fill="#9a9a9a"/>
<g transform="translate(191,61)"><circle r="7.500" stroke="#999" stroke-width="3" stroke-dasharray="7 2"/><path d="M-2 3.500V-3.500H1.500A2 2 0 0 1 1.500 .5H-2" stroke="#777" stroke-width="1.300"/></g>
<g transform="translate(229,61)"><rect x="-6.500" y="-6.500" width="13" height="13" stroke="#888" stroke-width="2"/><path d="M-3.500-9V-7M0-9V-7M3.500-9V-7M-3.500 7V9M0 7V9M3.500 7V9M-9-3.500H-7M-9 0H-7M-9 3.500H-7M7-3.500H9M7 0H9M7 3.500H9" stroke="#888" stroke-width="1.300"/><path d="M2-2.500H-2V2.500H2V0H0" stroke="#888"/></g>
<g transform="translate(267,61)"><circle r="8" fill="#b8b8b8"/><path d="M0-8A8 8 0 0 1 0 8Z" fill="#8c8c8c"/></g>
<g transform="translate(313,61)"><path d="M7 -5A8 8 0 1 0 7 4" stroke="#0a84ff" stroke-width="3.600"/><path d="M3-7H10V0Z" fill="#0a84ff"/></g>
<g transform="translate(354,61)" fill="#8a8a8a"><path d="M-8-8H-1L-3-5.500 0-2.500-2.500 0-5.500-3-8-1Z"/><path d="M8-8H1L3-5.500 0-2.500 2.500 0 5.500-3 8-1Z"/><path d="M-8 8H-1L-3 5.500 0 2.500-2.500 0-5.500 3-8 1Z"/><path d="M8 8H1L3 5.500 0 2.500 2.500 0 5.500 3 8 1Z"/></g>
<path d="M395 53L402 60H398V63L402 63 395 69 388 63H392V60H388Z" fill="#8a8a8a"/>
<g stroke="#888" stroke-width="1.100"><path d="M425 54H438V64H431V60H425ZM429 54V60M434 54V64M425 57H438M431 60H438"/></g><path d="M435 65h6l-3 3z" fill="#666"/>
<g transform="translate(514,60)" stroke="#777" stroke-width="1.300"><path d="M-6-6H-2L-1-8H3L4-6H6V7H-6Z"/><circle cy="0" r="3"/><path d="M5 5H10M7.500 2.500V7.500" stroke-width="1.600"/></g>
<g transform="translate(555,60)" stroke="#c4c4c4" stroke-width="1.300"><path d="M-6-6H-2L-1-8H3L4-6H6V7H-6Z"/><circle r="3"/><path d="M1 3A5 5 0 1 1 6 7"/></g>
<g transform="translate(596,60)" stroke="#c4c4c4" stroke-width="1.300"><path d="M-6-6H-2L-1-8H3L4-6H6V7H-6Z"/><circle r="3"/><rect x="2" y="2" width="6" height="5" fill="#c4c4c4"/></g>
<g transform="translate(642,60)" stroke="#777" stroke-width="1.500"><path d="M-5-8L-2 0L-4 6H4L6-7M-2 0H3M2-6L5-8"/></g><path d="M639 66h6l-3 3z" fill="#666"/>
<g stroke="#8f8f8f" stroke-width="1.200"><rect x="299" y="112" width="8" height="6"/><rect x="302" y="109" width="8" height="6" fill="#ececec"/><rect x="1880" y="112" width="8" height="6"/><rect x="1883" y="109" width="8" height="6" fill="#ececec"/></g>
<path d="M322 110L331 119M331 110L322 119M1903 110L1912 119M1912 110L1903 119" stroke="#777" stroke-width="2.800"/>
<g transform="translate(30,138)"><circle r="5.800" stroke="#0a84ff" stroke-width="2.800"/><path d="M-6 7H6" stroke="#0a84ff" stroke-width="2.600"/></g>
<g transform="translate(77,139)" stroke="#8a8a8a"><path d="M-7 6L-5-6L6 4Z" fill="#e0e0e0"/><path d="M-7 6L0-6L7 4L0 8Z" fill="#cfcfcf"/><path d="M-3 0L5 5M-1-3L6 2"/></g>
<g transform="translate(123,140)"><rect x="-7" y="-7" width="14" height="14" fill="#e8e8e8" stroke="#9a9a9a"/><rect x="-7" y="-7" width="7" height="7" fill="#666"/><rect x="0" y="0" width="7" height="7" fill="#666"/></g>
<use href="#gl" x="158" y="129" width="22" height="22" color="#aaa"/>
<g transform="translate(215,140)"><rect x="-7.500" y="-7" width="15" height="14" fill="#fff" stroke="#8a8a8a"/><path d="M-6 6L-1-1 2 3 4 1 6 6Z" fill="#777"/><circle cx="3" cy="-3" r="1.500" fill="#888"/></g>
<path d="M261 132L263.500 137.500 269 138 265 142 266.500 148 261 145 255.500 148 257 142 253 138 258.500 137.500Z" stroke="#8a8a8a" stroke-width="1.300"/>
<g fill="#888" stroke="#fafafa"><path d="M307 131L312 134V139L307 141 302 139V134Z"/><path d="M301 140L306 143V148L301 150 296 148V143Z"/><path d="M313 140L318 143V148L313 150 308 148V143Z"/></g>
<g stroke="#8a8a8a" stroke-width="1.500"><circle cx="21" cy="190" r="3.500"/><path d="M18.500 193L14.500 197"/></g>
<g transform="translate(276,192)" fill="#999"><path d="M-7-6H-2L0-4H6V-2H-5L-7 4Z"/><path d="M-5-1H7L5 5H-7Z"/><path d="M3 5H9M6 2V8" stroke="#777" stroke-width="1.300"/></g>
<g transform="translate(297,192)" fill="#999"><path d="M-7-6H-2L0-4H6V-2H-5L-7 4Z"/><path d="M-5-1H7L5 5H-7Z"/><path d="M9 5H3M5 2L2 5 5 8" stroke="#777" stroke-width="1.400"/></g>
<g transform="translate(318,192)"><path d="M-5-3A6 6 0 0 1 6 0M5 3A6 6 0 0 1-6 0" stroke="#888" stroke-width="2"/><path d="M3 0H9L6 3ZM-3 0H-9L-6-3Z" fill="#888"/></g>
<path d="M11 951H23M11 957H23M11 963H23" stroke="#777" stroke-width="2.400"/>
<path d="M30 952H42M30 957.500H42M30 963H42" stroke="#0a84ff" stroke-width="3" stroke-dasharray="3 1.500"/>
<g stroke="#888" stroke-width="1.500"><circle cx="66" cy="955" r="4"/><path d="M63 958L59 962"/><circle cx="267" cy="955" r="4"/><path d="M264 958L260 962M265 955H269M267 953V957"/></g>
<g transform="translate(295,957)"><path d="M-6 3A4 4 0 0 1-5-4A5 5 0 0 1 4-5A4 4 0 0 1 7 3H3" stroke="#888" stroke-width="1.400"/><path d="M0 8V0M-4 3L0-2 4 3" stroke="#777" stroke-width="2"/></g>
<g transform="translate(320,956)" fill="#999"><path d="M-7-6H-2L0-4H6V-2H-5L-7 4Z"/><path d="M-5-1H7L5 5H-7Z"/><path d="M3 5H9M6 2L9 5 6 8" stroke="#777" stroke-width="1.400"/></g>
<g transform="translate(1619,140)"><rect x="-7.500" y="-7.500" width="15" height="15" stroke="#8a8a8a" stroke-width="1.300" fill="#f0f0f0"/><path d="M-5-3.500H-3M-1-3.500H5M-5 0H-3M-1 0H5M-5 3.500H-3M-1 3.500H5" stroke="#888"/></g>
<g transform="translate(1672,138)"><circle r="5.800" stroke="#777" stroke-width="2.800"/><path d="M-6 7H6" stroke="#777" stroke-width="2.600"/></g>
<use href="#gl" x="1714" y="129" width="22" height="22" color="#0a84ff"/>
<g transform="translate(1778,140)" fill="#8a8a8a"><path d="M-4 2A6 6 0 1 1 4 2L3 5H-3Z"/><rect x="-2" y="6" width="4" height="2"/></g>
<g transform="translate(1831,140)" stroke="#8a8a8a" stroke-width="1.300"><path d="M-7.500-5H-3L-2-7H2L3-5H7.500V7H-7.500Z" fill="#f0f0f0"/><circle cy="1" r="3.300"/></g>
<g transform="translate(1883,140)" stroke="#8a8a8a" stroke-width="1.300"><rect x="-7" y="-7" width="14" height="14"/><g fill="#8a8a8a" stroke="none"><circle cx="-7" cy="-7" r="1.600"/><circle cx="7" cy="-7" r="1.600"/><circle cx="-7" cy="7" r="1.600"/><circle cx="7" cy="7" r="1.600"/></g></g>
<use href="#gl" x="1591" y="172" width="16" height="16" color="#bbb"/><use href="#gl" x="1596" y="175" width="18" height="18" color="#a0a0a0"/>
<use href="#gl" x="1591" y="200" width="22" height="22" color="#a0a0a0"/><path d="M1607 217H1614M1610.500 213.500V220.500" stroke="#777" stroke-width="1.400"/>
<g transform="translate(1603,240)" stroke="#999"><path d="M-7-6H-3L-2-8H2L3-6H6V5H-7Z"/></g><use href="#gl" x="1599" y="234" width="16" height="16" color="#999"/><path d="M1607 245H1614M1610.500 241.500V248.500" stroke="#777" stroke-width="1.400"/>
<g transform="translate(1603,268)"><path d="M-8-6H8M-3-6V-8H3V-6M-6-5L-5 7H5L6-5" stroke="#808080" stroke-width="1.600"/><path d="M-2.500-3V5M0-3V5M2.500-3V5" stroke="#808080"/></g>
<circle cx="1627" cy="184" r="5.500" fill="#4aa8f5"/><use href="#gl" x="1621" y="178" width="12" height="12" color="#cfe6fb"/>
<g transform="translate(1903,184)" fill="#6f6f6f"><rect x="-5" y="-1" width="10" height="6"/><path d="M-3-1V-3A3 3 0 0 1 3-3" stroke="#6f6f6f" stroke-width="1.600" fill="none"/></g>
<g transform="translate(45,1002)" stroke="#8a8a8a" stroke-width="2"><path d="M-10 9A7 7 0 0 1-11-4A7 7 0 0 1-5-9A8 8 0 0 1 7-9A7 7 0 0 1 11-3A7 7 0 0 1 9 9Q5 11 0 10Q-6 11-10 9Z"/><circle r="5.500" stroke-width="3" stroke-dasharray="6 2"/><circle r="2.500" fill="#777" stroke="none"/></g>
<g transform="translate(754,1001)"><circle r="12.500" stroke="#8c8c8c" stroke-width="2.800"/><path d="M0-15V-2" stroke="#8c8c8c" stroke-width="2"/><path d="M-5-5H5L0 3Z" fill="#8c8c8c"/><circle cx="11" cy="10" r="7.500" fill="#fafafa" stroke="#8c8c8c" stroke-width="2"/><path d="M7 10H15M11 6V14" stroke="#8c8c8c" stroke-width="1.800"/></g>
<path d="M810 990Q818 987 826 991V1014Q818 1011 809 1013ZM826 991Q834 987 842 990L843 1013Q834 1011 826 1014" stroke="#0a84ff" stroke-width="2.800" stroke-linejoin="round"/>
<rect x="879" y="988" width="29" height="27" rx="4" stroke="#0a84ff" stroke-width="3" fill="#e8f3fc"/><path d="M885 995H902M885 1001H902M885 1007H902" stroke="#0a84ff" stroke-width="1.400"/><path d="M908 994V998M908 1000V1004M908 1006V1010" stroke="#0a84ff" stroke-width="3"/>
<path d="M806 987L812 987 809 983ZM875 987L881 987 878 983Z" fill="#555"/>
<g transform="translate(964,1002)"><path d="M-13-6A14 14 0 1 1-14 2" stroke="#8c8c8c" stroke-width="3.400"/><path d="M-16-10L-9-11-12-3Z" fill="#8c8c8c"/><path d="M-4-7L7 0-4 7Z" fill="#8c8c8c"/></g>
<g transform="translate(1033,999)" stroke="#8c8c8c" stroke-width="2.200"><path d="M0-14L10-9V3L0 8-10 3V-9ZM-10-9L0-4 10-9M0-4V8"/><path d="M-13-2Q-18 9-7 14M13-2Q18 9 7 14" stroke-width="3"/><path d="M-10 12L-3 14-8 19Z" fill="#8c8c8c" stroke="none"/></g>
<g transform="translate(1102,1001)"><ellipse rx="13" ry="17" stroke="#e0e0e0" stroke-width="2.400"/><rect x="-15" y="-8" width="30" height="15" rx="5" fill="#dcdcdc"/><path d="M4-6L0 5M9-6L5 5" stroke="#fafafa" stroke-width="1.400"/></g>
<g transform="translate(1169,1000)" stroke="#8c8c8c" stroke-width="2.400"><path d="M-14-10H-8V-13H-2V-10H13V11H-14Z"/><circle cy="1" r="7.500"/><circle cx="10" cy="8" r="8" fill="#fafafa"/><path d="M6 8L9 11 14 5" stroke-width="2"/></g>
<path d="M1866 1001V985H1873M1879 985H1885M1890 985V993M1866 1005V1010H1874" stroke="#9a9a9a" stroke-width="2.400"/>
<g transform="translate(1889,1010)" stroke="#808080" stroke-width="2"><circle r="7"/><path d="M-9 0H9M0-9V9" stroke-width="1.600"/></g>
</svg>
</body></html>
